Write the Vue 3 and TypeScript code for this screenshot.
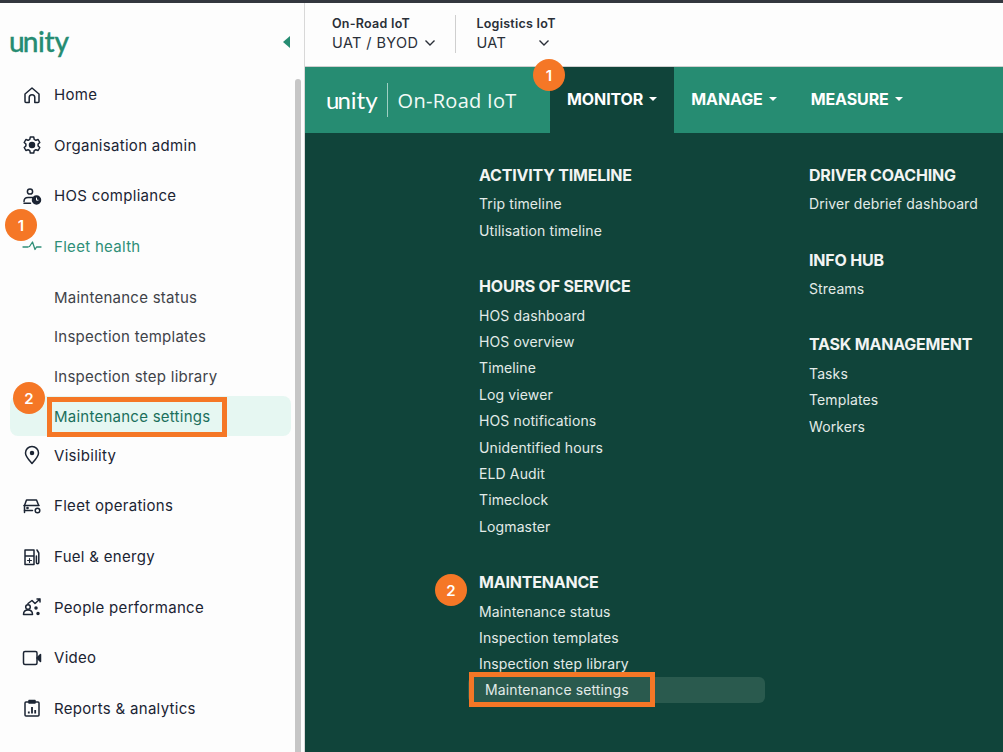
<template>
  <div class="page">
    <aside class="sidebar">
      <div class="brand">
        <span class="logo"><span class="tight">u</span>nity</span>
        <span class="collapse"></span>
      </div>
      <nav class="side-nav">
        <template v-for="item in sideItems" :key="item.label">
          <a class="side-item" :class="{ active: item.active }" :style="{ height: item.h + 'px' }">
            <svg class="ico" viewBox="0 0 20 20" fill="none" stroke="currentColor" stroke-width="1.5" stroke-linecap="round" stroke-linejoin="round" v-html="item.icon"></svg>
            <span>{{ item.label }}</span>
          </a>
          <div v-if="item.active" class="sub-list">
            <a v-for="sub in subItems" :key="sub.label" class="sub-item" :class="{ selected: sub.selected }" :style="{ height: sub.h + 'px' }">{{ sub.label }}</a>
          </div>
        </template>
      </nav>
      <div class="scrollbar"></div>
      <span class="badge side-one">1</span>
      <span class="badge side-two">2</span>
      <div class="outline side-outline"></div>
    </aside>

    <main class="main">
      <header class="env-bar">
        <div class="env">
          <div class="env-name">On-Road IoT</div>
          <div class="env-value">UAT / BYOD
            <svg class="chev" viewBox="0 0 12 8"><path d="M1.5 1.5 6 6l4.5-4.5" /></svg>
          </div>
        </div>
        <div class="env second">
          <div class="env-name">Logistics IoT</div>
          <div class="env-value wide">UAT
            <svg class="chev" viewBox="0 0 12 8"><path d="M1.5 1.5 6 6l4.5-4.5" /></svg>
          </div>
        </div>
      </header>

      <div class="top-nav">
        <div class="product">
          <span class="logo-white"><span class="tight">u</span>nity</span>
          <span class="product-name">On-Road IoT</span>
        </div>
        <div v-for="tab in tabs" :key="tab" class="tab" :class="{ open: tab === 'MONITOR' }">
          {{ tab }}<i class="caret"></i>
        </div>
      </div>

      <section class="mega">
        <div class="col first-col">
          <div v-for="g in leftGroups" :key="g.title" class="group" :class="g.cls">
            <h4>{{ g.title }}</h4>
            <a v-for="l in g.links" :key="l" :class="{ hover: l === 'Maintenance settings' }">{{ l }}</a>
          </div>
        </div>
        <div class="col">
          <div v-for="g in rightGroups" :key="g.title" class="group" :class="g.cls">
            <h4>{{ g.title }}</h4>
            <a v-for="l in g.links" :key="l">{{ l }}</a>
          </div>
        </div>
        <span class="badge mega-two">2</span>
        <div class="outline mega-outline"></div>
      </section>
      <span class="badge top-one">1</span>
    </main>
  </div>
</template>

<script setup lang="ts">
type SideItem = { label: string; icon: string; h: number; active?: boolean }

const sideItems: SideItem[] = [
  { label: 'Home', h: 51, icon: '<path d="M3 9 10 3l7 6v7.500a1 1 0 0 1-1 1h-3.200v-5a2.800 2.800 0 0 0-5.600 0v5H4a1 1 0 0 1-1-1z"/>' },
  { label: 'Organisation admin', h: 50, icon: '<path d="M8.300 2h3.400l.5 2.300 1.700 1 2.200-.8 1.700 3-1.700 1.500v2l1.700 1.500-1.700 3-2.200-.8-1.700 1-.5 2.300H8.300l-.5-2.300-1.700-1-2.200.8-1.700-3L3.900 11V9L2.200 7.500l1.700-3 2.200.8 1.700-1z"/><circle cx="10" cy="10" r="2.500" fill="currentColor"/>' },
  { label: 'HOS compliance', h: 51, icon: '<circle cx="8" cy="5.500" r="2.600"/><path d="M2 15.500c0-2.500 1.500-4 4-4h5"/><path d="M2 17.300h6.500"/><circle cx="14.500" cy="14" r="4" fill="currentColor"/><path d="M14.500 12v2.200h1.500" stroke="#fff" stroke-width="1"/>' },
  { label: 'Fleet health', h: 50, active: true, icon: '<path d="M1 11h5l1.500-.5 3-4.500 2.500 7.500 1.500-2.500H19" stroke-width="1.300"/>' },
  { label: 'Visibility', h: 50, icon: '<path d="M10 18.500C6.500 14.500 3.500 11.500 3.500 8a6.500 6.500 0 0 1 13 0c0 3.500-3 6.500-6.500 10.500z"/><circle cx="10" cy="8" r="1.500" fill="currentColor"/>' },
  { label: 'Fleet operations', h: 51, icon: '<path d="M2.500 16.500V9.500L4.500 4h10l2 5"/><path d="M2 9.500h15M2.500 14.500h8"/><circle cx="5.500" cy="12" r=".6"/><circle cx="15.500" cy="14.500" r="2.300" fill="#fdfdfd"/>' },
  { label: 'Fuel & energy', h: 51, icon: '<path d="M3 3h9v14.500H3zM3 9h9"/><path d="M7.500 11.500v4M5.500 13.500h4" stroke-width="1.100"/><path d="M15 3l1.800 3v9.500a1.200 1.200 0 0 1-2.400 0V9"/>' },
  { label: 'People performance', h: 50, icon: '<circle cx="6" cy="10" r="2.300"/><path d="M1.500 17.500c0-3 2-4.500 4.500-4.500s4.500 1.500 4.500 4.500z"/><path d="M6 6.500 10 3.500l3 3 5-4.500M15 2h3v3" /><circle cx="14" cy="11" r="1" fill="currentColor"/><circle cx="16" cy="16.500" r="1" fill="currentColor"/>' },
  { label: 'Video', h: 51, icon: '<rect x="1.500" y="3.500" width="13.500" height="13" rx="1.500"/><path d="M15 10 18.500 6.500v7z" fill="currentColor"/>' },
  { label: 'Reports & analytics', h: 50, icon: '<rect x="3" y="4" width="14" height="14" rx="1"/><rect x="7" y="2.500" width="6" height="2.500" fill="currentColor"/><path d="M6.800 15.500v-2M10 15.500V9M13.200 15.500v-3.500" stroke-width="1.800" stroke-linecap="butt"/>' },
]

const subItems = [
  { label: 'Maintenance status', h: 40 },
  { label: 'Inspection templates', h: 39 },
  { label: 'Inspection step library', h: 40 },
  { label: 'Maintenance settings', h: 40, selected: true },
]

const tabs = ['MONITOR', 'MANAGE', 'MEASURE']

const leftGroups = [
  { title: 'ACTIVITY TIMELINE', cls: 'g-activity', links: ['Trip timeline', 'Utilisation timeline'] },
  { title: 'HOURS OF SERVICE', cls: 'g-hos', links: ['HOS dashboard', 'HOS overview', 'Timeline', 'Log viewer', 'HOS notifications', 'Unidentified hours', 'ELD Audit', 'Timeclock', 'Logmaster'] },
  { title: 'MAINTENANCE', cls: 'g-maint', links: ['Maintenance status', 'Inspection templates', 'Inspection step library', 'Maintenance settings'] },
]

const rightGroups = [
  { title: 'DRIVER COACHING', cls: 'g-driver', links: ['Driver debrief dashboard'] },
  { title: 'INFO HUB', cls: 'g-info', links: ['Streams'] },
  { title: 'TASK MANAGEMENT', cls: 'g-task', links: ['Tasks', 'Templates', 'Workers'] },
]
</script>

<style>
html, body {
  margin: 0;
  overflow: hidden;
}
</style>

<style scoped>
.page {
  display: flex;
  width: 1003px;
  height: 752px;
  overflow: hidden;
  border-top: 3px solid #33373f;
  box-sizing: border-box;
  font-family: Inter, "Liberation Sans", sans-serif;
  background: #fdfdfd;
}

.sidebar {
  position: relative;
  width: 305px;
  flex: none;
  border-right: 1px solid #d8d8d8;
  box-sizing: border-box;
}

.brand {
  display: flex;
  justify-content: space-between;
  align-items: center;
  height: 66px;
  padding: 12px 14px 0 9px;
  box-sizing: border-box;
}

.logo {
  font-family: Lato, sans-serif;
  font-size: 28px;
  font-weight: 500;
  letter-spacing: -0.3px;
  -webkit-text-stroke: 0.3px #268c72;
  color: #268c72;
  line-height: 1;
  margin-top: -3px;
}

.tight {
  letter-spacing: -2px;
}

.collapse {
  width: 0;
  height: 0;
  border: 6px solid transparent;
  border-left: 0;
  border-right: 7px solid #268c72;
}

.side-nav {
  display: flex;
  flex-direction: column;
}

.side-item {
  display: flex;
  align-items: center;
  gap: 12px;
  padding-left: 22px;
  font-size: 15px;
  letter-spacing: 0.3px;
  color: #1b2433;
  box-sizing: border-box;
}

.side-item.active {
  color: #2f8f78;
}

.ico {
  width: 20px;
  height: 20px;
  flex: none;
}

.sub-list {
  display: flex;
  flex-direction: column;
  margin: 6px 0 -6px;
}

.sub-item {
  display: flex;
  align-items: center;
  margin: 0 13px 0 10px;
  padding-left: 44px;
  border-radius: 8px;
  font-size: 15px;
  letter-spacing: 0.25px;
  color: #3f4349;
}

.sub-item.selected {
  background: #e6f7f2;
  color: #1b6f5c;
}

.scrollbar {
  position: absolute;
  right: 3px;
  top: 76px;
  bottom: 0;
  width: 6px;
  border-radius: 3px 3px 0 0;
  background: #c6c6c6;
}

.badge {
  position: absolute;
  display: flex;
  align-items: center;
  justify-content: center;
  width: 32px;
  height: 32px;
  border-radius: 50%;
  background: #f57726;
  color: #fff;
  font-size: 15px;
  font-weight: 600;
  z-index: 3;
}

.side-one { left: 5px; top: 206px; }
.side-two { left: 13px; top: 379px; }

.outline {
  position: absolute;
  border: 5px solid #f57726;
  box-sizing: border-box;
  z-index: 2;
}

.side-outline {
  left: 47px;
  top: 394px;
  width: 180px;
  height: 40px;
}

.main {
  position: relative;
  flex: 1;
  min-width: 0;
  display: flex;
  flex-direction: column;
}

.env-bar {
  display: flex;
  height: 64px;
  padding-top: 12px;
  box-sizing: border-box;
  padding-left: 27px;
  border-bottom: 1px solid #cfcfcf;
  background: #fdfdfd;
}

.env {
  padding-right: 19px;
}

.env.second {
  padding-left: 20px;
  border-left: 1px solid #cfcfcf;
  height: 38px;
}

.env-name {
  font-size: 12.500px;
  font-weight: 600;
  letter-spacing: 0.25px;
  color: #2a2f38;
  line-height: 17px;
}

.env-value {
  display: flex;
  align-items: center;
  gap: 6px;
  font-size: 14.500px;
  letter-spacing: 0.4px;
  color: #2a2f38;
  line-height: 22px;
}

.env-value.wide {
  width: 74px;
  justify-content: space-between;
}

.chev {
  width: 12px;
  height: 8px;
  fill: none;
  stroke: #2a2f38;
  stroke-width: 1.400;
}

.top-nav {
  display: flex;
  height: 66px;
  background: #268c72;
  color: #fff;
}

.product {
  display: flex;
  align-items: center;
  width: 245px;
  padding-left: 21px;
  box-sizing: border-box;
}

.logo-white {
  font-family: Lato, sans-serif;
  font-size: 24px;
  padding-right: 9px;
  border-right: 1px solid #9fd0c3;
  line-height: 34px;
}

.product-name {
  padding-left: 10px;
  font-family: "Open Sans", sans-serif;
  font-size: 20px;
  letter-spacing: 0.3px;
  color: #f2faf7;
}

.tab {
  display: flex;
  align-items: center;
  padding: 0 17px 2px;
  font-size: 16px;
  font-weight: 700;
  letter-spacing: -0.1px;
}

.tab.open {
  background: #10443a;
}

.caret {
  width: 0;
  height: 0;
  margin-left: 6px;
  border: 4px solid transparent;
  border-top: 4px solid #fff;
  border-bottom: 0;
}

.mega {
  position: relative;
  flex: 1;
  display: flex;
  background: #10443a;
  padding-left: 174px;
}

.col {
  display: flex;
  flex-direction: column;
  width: 330px;
  flex: none;
}

.group {
  display: flex;
  flex-direction: column;
}

.group h4 {
  margin: 0;
  font-size: 16px;
  font-weight: 700;
  letter-spacing: -0.2px;
  line-height: 22px;
  color: #f2f4f3;
}

.group a {
  font-size: 14px;
  letter-spacing: 0.12px;
  line-height: 26.400px;
  color: #e3ebe8;
}

.group h4 + a {
  margin-top: 5.400px;
}

.g-activity, .g-driver { padding-top: 31px; }
.g-hos { padding-top: 31px; }
.g-maint { padding-top: 31px; }
.g-info { padding-top: 31px; }
.g-task { padding-top: 30px; }
.g-task h4 { margin-bottom: 1px; }

.group a.hover {
  position: relative;
  width: 297px;
  margin-top: -1px;
  margin-left: -11px;
  padding-left: 17px;
  box-sizing: border-box;
  background: #2a5a4e;
  border-radius: 6px;
}

.mega-two { left: 130px; top: 441px; }

.mega-outline {
  left: 164px;
  top: 539px;
  width: 186px;
  height: 35px;
}

.top-one {
  left: 228px;
  top: 56px;
}
</style>
